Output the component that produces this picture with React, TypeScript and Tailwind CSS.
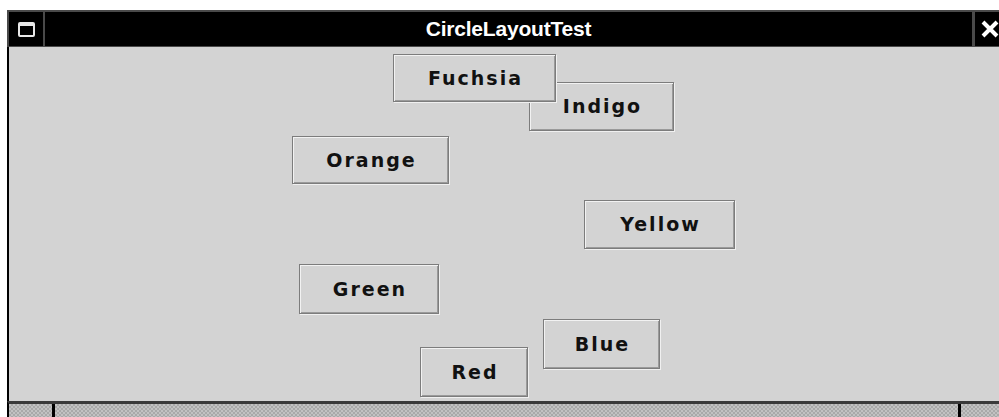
import type { FC } from 'react';

type Btn = { label: string; x: number; y: number; w: number; h: number };

// canvas coords are relative to the content panel (starts at x=9, y=47)
const buttons: Btn[] = [
    { label: 'Indigo', x: 520, y: 35, w: 145, h: 49 },
    { label: 'Fuchsia', x: 384, y: 7, w: 163, h: 48 },
    { label: 'Orange', x: 283, y: 89, w: 157, h: 48 },
    { label: 'Yellow', x: 575, y: 153, w: 151, h: 49 },
    { label: 'Green', x: 290, y: 217, w: 140, h: 50 },
    { label: 'Blue', x: 534, y: 272, w: 117, h: 50 },
    { label: 'Red', x: 411, y: 300, w: 108, h: 50 },
];

const TitleBar: FC = () => {
    return <div className="flex h-[37px] bg-black border-t-2 border-[#4a4a4a]">
        {/* window menu box */}
        <div className="w-[38px] shrink-0 flex items-center justify-center border-l-2 border-r-2 border-b border-[#4a4a4a]">
            <div className="w-[17px] h-[15px] border-2 border-t-4 border-[#e8e8e8] rounded-[2px]" />
        </div>
        <div className="w-[927px] shrink-0 flex items-center justify-center border-b border-[#4a4a4a]">
            <span className="text-white font-bold text-[21px] tracking-[-0.2px] font-['Liberation_Sans',sans-serif]">
                CircleLayoutTest
            </span>
        </div>
        <div className="w-[40px] shrink-0 flex items-center border-l-[3px] border-b border-[#4a4a4a] pl-[5px]">
            <svg width="20" height="20" viewBox="0 0 20 20">
                <path d="M3 3 L17 17 M17 3 L3 17" stroke="#ffffff" strokeWidth="4" />
            </svg>
        </div>
    </div>;
}

const App: FC = () => {
    return <div className="w-[999px] h-[417px] bg-white overflow-hidden pl-[7px] pt-[10px]">
        <div className="w-[1010px] h-[407px] flex flex-col">
            <TitleBar />

            {/* content panel with circle-laid-out buttons */}
            <div className="relative flex-1 bg-[#d3d3d3] border-l-2 border-black">
                {buttons.map(b => (
                    <div
                        key={b.label}
                        className="absolute flex items-center justify-center pl-[2px] bg-[#d3d3d3] border border-[#7c7c7c] shadow-[inset_1px_1px_0_#f2f2f2,inset_-1px_-1px_0_#9a9a9a,1px_1px_0_#f0f0f0] font-['DejaVu_Sans','Verdana',sans-serif] font-bold text-[19px] tracking-[2px] text-[#111]"
                        style={{ left: b.x, top: b.y, width: b.w, height: b.h }}
                    >
                        {b.label}
                    </div>
                ))}
            </div>

            {/* bottom scroll strip */}
            <div className="h-[16px] flex border-t-[3px] border-[#3a3a3a] border-l-2 border-l-black">
                <div className="w-[43px] bg-[repeating-conic-gradient(#a9a9a9_0_25%,#c2c2c2_0_50%)] bg-[length:4px_4px]" />
                <div className="w-[3px] bg-black" />
                <div className="w-[903px] bg-[repeating-conic-gradient(#a9a9a9_0_25%,#c2c2c2_0_50%)] bg-[length:4px_4px]" />
                <div className="w-[3px] bg-black" />
                <div className="flex-1 bg-[repeating-conic-gradient(#a9a9a9_0_25%,#c2c2c2_0_50%)] bg-[length:4px_4px]" />
            </div>
        </div>
    </div>;
}

export default App;
